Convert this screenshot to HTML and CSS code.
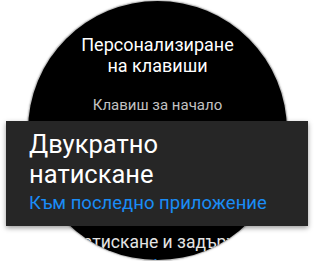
FILE: index.html
```html
<!DOCTYPE html>
<html lang="bg">
<head>
<meta charset="utf-8">
<link rel="stylesheet" href="styles.css">
</head>
<body>
<div class="stage">
  <div class="watch">
    <div class="title">Персонализиране<br>на клавиши</div>
    <div class="section">Клавиш за начало</div>
    <div class="item">Натискане и задържане</div>
    <div class="item-value">Google Асистент</div>
  </div>
  <div class="focus">
    <div class="focus-title">Двукратно<br>натискане</div>
    <div class="focus-value">Към последно приложение</div>
  </div>
</div>
</body>
</html>
```
FILE: styles.css
```css
html, body {
  margin: 0;
  padding: 0;
  background: #ffffff;
}
body {
  font-family: Roboto, "Noto Sans", "Liberation Sans", sans-serif;
}
.stage {
  width: 315px;
  height: 261px;
  overflow: hidden;
  display: grid;
}
.watch {
  grid-area: 1 / 1;
  align-self: start;
  justify-self: start;
  margin: 1px 0 0 28px;
  width: 259px;
  height: 259px;
  border-radius: 50%;
  background: #000;
  box-shadow: 0 0 0 1px #c4c4c4, 0 0 2px 1px rgba(0,0,0,0.25);
  overflow: hidden;
  text-align: center;
  box-sizing: border-box;
  padding-top: 33px;
}
.title {
  color: #fff;
  font-size: 18px;
  line-height: 21px;
}
.section {
  color: #c2c2c2;
  font-size: 15px;
  line-height: 20px;
  margin-top: 18.5px;
}
.item {
  color: #e4e4e4;
  font-size: 17.5px;
  line-height: 20px;
  margin-top: 117px;
  padding-left: 24px;
  white-space: nowrap;
}
.item-value {
  color: #1a8ff0;
  font-size: 16px;
  line-height: 20px;
  margin-top: 4px;
}
.focus {
  grid-area: 1 / 1;
  align-self: start;
  justify-self: start;
  margin: 121px 0 0 6px;
  width: 302px;
  height: 105px;
  box-sizing: border-box;
  padding: 8.3px 0 0 23px;
  background: #262626;
  box-shadow: 0 2px 5px rgba(0,0,0,0.4);
}
.focus-title {
  color: #fff;
  font-size: 25.5px;
  line-height: 30px;
}
.focus-value {
  color: #1a8cf5;
  font-size: 18.5px;
  line-height: 22px;
  margin-top: 2.4px;
}
```
